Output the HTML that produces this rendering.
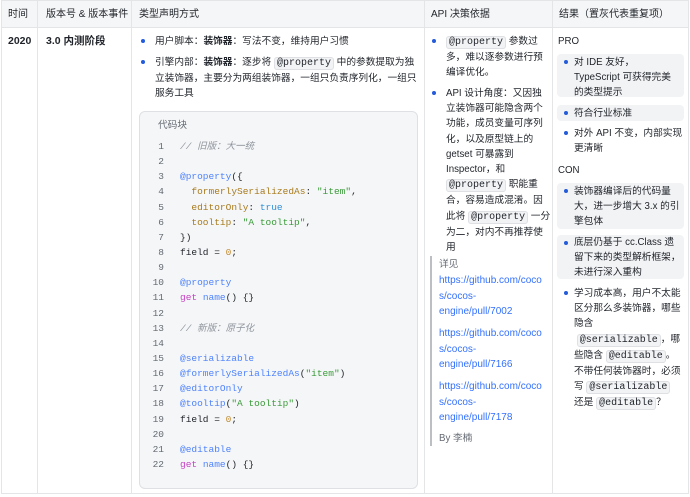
<!DOCTYPE html>
<html><head><meta charset="utf-8"><style>
*{margin:0;padding:0;box-sizing:border-box}
body{width:690px;height:497px;background:#fff;font-family:"Liberation Sans","Noto Sans CJK SC",sans-serif;font-size:9.7px;color:#1f2329;position:relative;overflow:hidden}
.a{position:absolute;line-height:15.2px;white-space:nowrap}
.hdr{position:absolute;left:1px;top:0;width:687px;height:28px;background:#f5f6f7;border-bottom:1px solid #e4e5e7;border-top:1px solid #e4e5e7}
.v{position:absolute;top:0;width:1px;height:494px;background:#e4e5e7}
.bot{position:absolute;left:1px;top:493px;width:687px;height:1px;background:#e4e5e7}
.h{position:absolute;top:7px;font-size:10px;line-height:15px;color:#1f2329;white-space:nowrap}
.dot{position:absolute;width:4px;height:4px;border-radius:50%;background:#245bdb}
code{font-family:"Liberation Mono",monospace;font-size:10px;background:#f2f3f5;border:1px solid #dee0e3;border-radius:3px;padding:0 2px}
.cb{position:absolute;left:139px;top:111px;width:279px;height:378px;background:#f5f6f7;border:1px solid #dee0e3;border-radius:6px}
.ln{position:absolute;left:150px;width:14px;text-align:right;font-family:"Liberation Mono",monospace;font-size:9.5px;color:#646a73;line-height:15.14px}
.cd{position:absolute;left:180px;font-family:"Liberation Mono",monospace;font-size:9.5px;line-height:15.14px;white-space:pre;color:#1f2329}
.c{color:#8f959e;font-style:italic}.d{color:#4e83fd}.k{color:#c740c7}.s{color:#3a9b3a}.p{color:#a87b1e}.b{color:#2f8fd6}.n{color:#c08a2e}
.box{position:absolute;left:557px;width:127px;background:#f2f3f5;border-radius:4px}
a{color:#3370ff;text-decoration:none}
</style></head><body>
<div class="hdr"></div>
<div class="v" style="left:1px"></div><div class="v" style="left:37px"></div><div class="v" style="left:131px"></div><div class="v" style="left:424px"></div><div class="v" style="left:552px"></div><div class="v" style="left:688px"></div>
<div class="bot"></div>
<div class="h" style="left:8px">时间</div>
<div class="h" style="left:46px">版本号 &amp; 版本事件</div>
<div class="h" style="left:139px">类型声明方式</div>
<div class="h" style="left:431px">API 决策依据</div>
<div class="h" style="left:559px">结果（置灰代表重复项）</div>

<div class="a" style="left:8px;top:34px;font-weight:bold;font-size:10.5px">2020</div>
<div class="a" style="left:46px;top:34px;font-weight:bold;font-size:10.5px">3.0 内测阶段</div>

<div class="dot" style="left:141px;top:39px"></div>
<div class="a" style="left:155px;top:34px">用户脚本：<b>装饰器</b>：写法不变，维持用户习惯</div>
<div class="dot" style="left:141px;top:60px"></div>
<div class="a" style="left:155px;top:55px">引擎内部：<b>装饰器</b>：逐步将 <code>@property</code> 中的参数提取为独<br>立装饰器，主要分为两组装饰器，一组只负责序列化，一组只<br>服务工具</div>

<div class="cb"></div>
<div class="a" style="left:158px;top:118px;color:#646a73">代码块</div>
<div class="ln" style="top:139px">1<br>2<br>3<br>4<br>5<br>6<br>7<br>8<br>9<br>10<br>11<br>12<br>13<br>14<br>15<br>16<br>17<br>18<br>19<br>20<br>21<br>22</div>
<div class="cd" style="top:139px"><span class="c">// 旧版：大一统</span>

<span class="d">@property</span>({
  <span class="p">formerlySerializedAs</span>: <span class="s">"item"</span>,
  <span class="p">editorOnly</span>: <span class="b">true</span>
  <span class="p">tooltip</span>: <span class="s">"A tooltip"</span>,
})
field = <span class="n">0</span>;

<span class="d">@property</span>
<span class="k">get</span> <span class="d">name</span>() {}

<span class="c">// 新版：原子化</span>

<span class="d">@serializable</span>
<span class="d">@formerlySerializedAs</span>(<span class="s">"item"</span>)
<span class="d">@editorOnly</span>
<span class="d">@tooltip</span>(<span class="s">"A tooltip"</span>)
field = <span class="n">0</span>;

<span class="d">@editable</span>
<span class="k">get</span> <span class="d">name</span>() {}</div>

<div class="dot" style="left:432px;top:39px"></div>
<div class="a" style="left:446px;top:34px"><code>@property</code> 参数过<br>多，难以逐参数进行预<br>编译优化。</div>
<div class="dot" style="left:432px;top:91px"></div>
<div class="a" style="left:446px;top:86px">API 设计角度：又因独<br>立装饰器可能隐含两个<br>功能，成员变量可序列<br>化，以及原型链上的<br>getset 可暴露到<br>Inspector，和<br><code>@property</code> 职能重<br>合，容易造成混淆。因<br>此将 <code>@property</code> 一分<br>为二，对内不再推荐使<br>用</div>
<div style="position:absolute;left:430px;top:256px;width:2px;height:190px;background:#bbbfc4"></div>
<div class="a" style="left:439px;top:257px;color:#646a73">详见</div>
<div class="a" style="left:439px;top:273px;line-height:15.6px;font-size:10px"><a>https://github.com/coco<br>s/cocos-<br>engine/pull/7002</a></div>
<div class="a" style="left:439px;top:326px;line-height:15.6px;font-size:10px"><a>https://github.com/coco<br>s/cocos-<br>engine/pull/7166</a></div>
<div class="a" style="left:439px;top:379px;line-height:15.6px;font-size:10px"><a>https://github.com/coco<br>s/cocos-<br>engine/pull/7178</a></div>
<div class="a" style="left:439px;top:431px;color:#646a73">By 李楠</div>

<div class="a" style="left:558px;top:34px">PRO</div>
<div class="box" style="top:54px;height:43px"></div>
<div class="dot" style="left:564px;top:60px"></div>
<div class="a" style="left:574px;top:55px">对 IDE 友好，<br>TypeScript 可获得完美<br>的类型提示</div>
<div class="box" style="top:105px;height:16px"></div>
<div class="dot" style="left:564px;top:111px"></div>
<div class="a" style="left:574px;top:106px">符合行业标准</div>
<div class="dot" style="left:564px;top:131px"></div>
<div class="a" style="left:574px;top:126px">对外 API 不变，内部实现<br>更清晰</div>
<div class="a" style="left:558px;top:163px">CON</div>
<div class="box" style="top:183px;height:46px"></div>
<div class="dot" style="left:564px;top:189px"></div>
<div class="a" style="left:574px;top:184px">装饰器编译后的代码量<br>大，进一步增大 3.x 的引<br>擎包体</div>
<div class="box" style="top:235px;height:44px"></div>
<div class="dot" style="left:564px;top:241px"></div>
<div class="a" style="left:574px;top:235px">底层仍基于 cc.Class 遗<br>留下来的类型解析框架，<br>未进行深入重构</div>
<div class="dot" style="left:564px;top:291px"></div>
<div class="a" style="left:574px;top:286px">学习成本高，用户不太能<br>区分那么多装饰器，哪些<br>隐含<br>&nbsp;<code>@serializable</code>，哪<br>些隐含 <code>@editable</code>。<br>不带任何装饰器时，必须<br>写 <code>@serializable</code><br>还是 <code>@editable</code>？</div>
</body></html>
